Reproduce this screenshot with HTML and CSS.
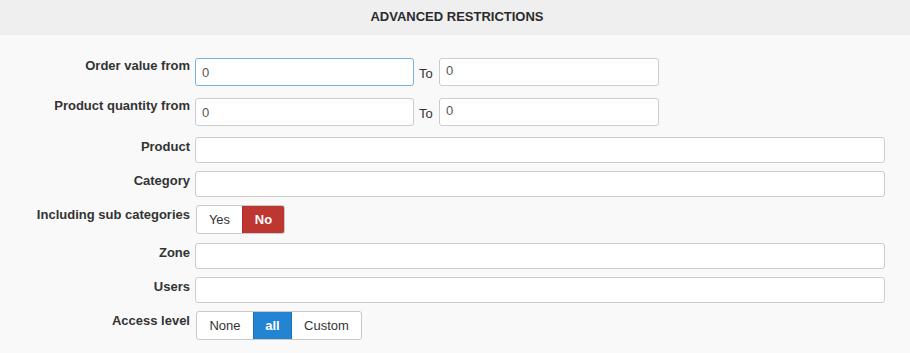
FILE: index.html
```html
<!DOCTYPE html>
<html>
<head>
<meta charset="utf-8">
<link rel="stylesheet" href="styles.css">
</head>
<body>
<div class="panel">
  <div class="panel-head">ADVANCED RESTRICTIONS</div>
  <div class="form">
    <div class="row row-range first">
      <label class="lbl">Order value from</label>
      <div class="field range">
        <input class="inp inp-range inp-focus" value="0">
        <span class="to">To</span>
        <input class="inp inp-range inp-to" value="0">
      </div>
    </div>
    <div class="row row-range second">
      <label class="lbl">Product quantity from</label>
      <div class="field range">
        <input class="inp inp-range" value="0">
        <span class="to">To</span>
        <input class="inp inp-range inp-to" value="0">
      </div>
    </div>
    <div class="row">
      <label class="lbl">Product</label>
      <div class="field"><input class="inp inp-full" value=""></div>
    </div>
    <div class="row">
      <label class="lbl">Category</label>
      <div class="field"><input class="inp inp-full" value=""></div>
    </div>
    <div class="row row-toggle">
      <label class="lbl">Including sub categories</label>
      <div class="field">
        <div class="btn-group">
          <span class="btn btn-yes">Yes</span>
          <span class="btn btn-no">No</span>
        </div>
      </div>
    </div>
    <div class="row">
      <label class="lbl">Zone</label>
      <div class="field"><input class="inp inp-full" value=""></div>
    </div>
    <div class="row">
      <label class="lbl">Users</label>
      <div class="field"><input class="inp inp-full" value=""></div>
    </div>
    <div class="row">
      <label class="lbl">Access level</label>
      <div class="field">
        <div class="btn-group">
          <span class="btn btn-none">None</span>
          <span class="btn btn-all">all</span>
          <span class="btn btn-custom">Custom</span>
        </div>
      </div>
    </div>
  </div>
</div>
</body>
</html>
```

FILE: styles.css
```css
html, body {
  margin: 0;
  padding: 0;
  background: #f9f9f9;
  font-family: "Liberation Sans", Arial, sans-serif;
  font-size: 13px;
  color: #333;
}

.panel {
  width: 910px;
}

.panel-head {
  height: 35px;
  box-sizing: border-box;
  background: #efefef;
  text-align: center;
  font-weight: bold;
  font-size: 13px;
  line-height: 18px;
  padding: 8px 0 0 4px;
  color: #2b2b2b;
}

.form {
  padding-top: 23px;
  display: flex;
  flex-direction: column;
  gap: 8px;
}

.row {
  display: flex;
  align-items: flex-start;
  gap: 5px;
}

.row.first { margin-bottom: 4px; }
.row.second { margin-bottom: 3px; }
.row.row-toggle { margin-bottom: 1px; }

.lbl {
  width: 190px;
  flex: none;
  text-align: right;
  font-weight: bold;
  line-height: 18px;
  padding-top: 1px;
  color: #333;
}

.row-range .lbl {
  padding-top: 0;
  margin-top: -1px;
}

.field {
  display: flex;
  align-items: center;
}

.inp {
  box-sizing: border-box;
  border: 1px solid #ccc;
  border-radius: 3px;
  background: #fff;
  font-family: "Liberation Sans", Arial, sans-serif;
  font-size: 13px;
  color: #555;
  padding: 0 6px;
  margin: 0;
  outline: none;
}

.inp-range {
  width: 219px;
  height: 28px;
}

.inp-to {
  width: 220px;
  padding-bottom: 3px;
}

.inp-focus {
  border-color: #72b3e8;
}

.inp-full {
  width: 690px;
  height: 26px;
}

.to {
  width: 25px;
  padding-left: 5px;
  box-sizing: border-box;
  padding-top: 3px;
  color: #333;
}

.btn-group {
  display: flex;
  height: 29px;
  box-sizing: border-box;
  border: 1px solid #c9c9c9;
  border-radius: 3px;
  overflow: hidden;
  background: #fff;
  margin-left: 1px;
}

.btn {
  display: flex;
  align-items: center;
  justify-content: center;
  box-sizing: border-box;
  color: #333;
  font-size: 13px;
}

.btn-yes { width: 45px; }
.btn-no {
  width: 43px;
  background: #bd362f;
  color: #fff;
  font-weight: bold;
  border: 1px solid #a5302a;
  border-radius: 0 3px 3px 0;
  margin: -1px -1px -1px 0;
  height: 29px;
}

.btn-none { width: 56px; }
.btn-all {
  width: 39px;
  background: #2384d3;
  color: #fff;
  font-weight: bold;
  border: 1px solid #1f6fb2;
  margin: -1px 0;
  height: 29px;
}
.btn-custom { width: 69px; }
```
